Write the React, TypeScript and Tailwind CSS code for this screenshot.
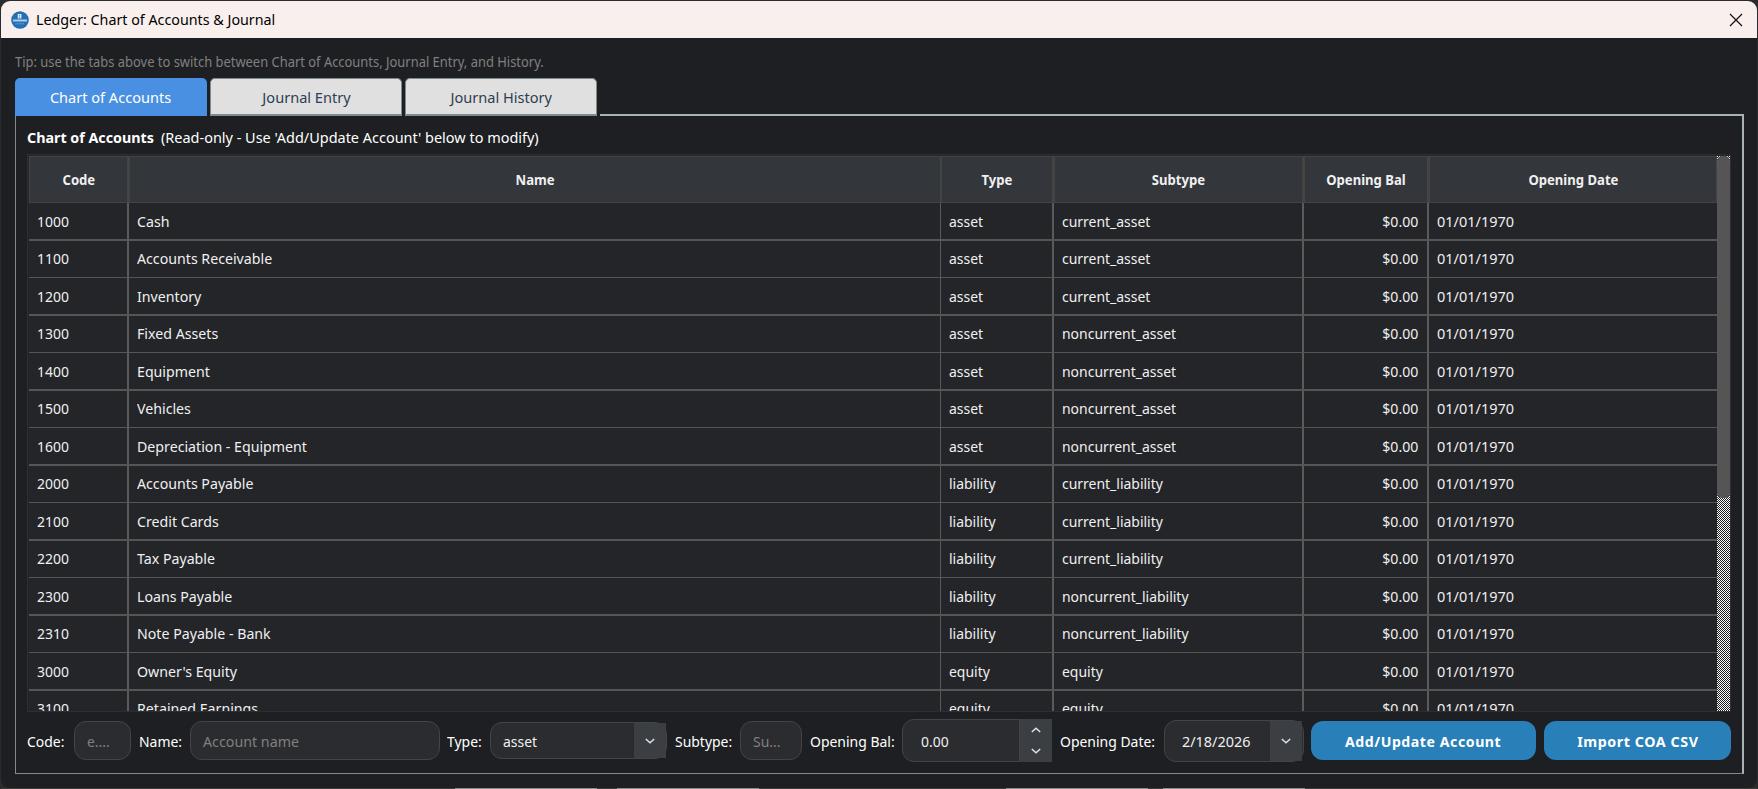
import type { ReactNode } from "react";

type Account = [code: string, name: string, type: string, subtype: string];

const accounts: Account[] = [
  ["1000", "Cash", "asset", "current_asset"],
  ["1100", "Accounts Receivable", "asset", "current_asset"],
  ["1200", "Inventory", "asset", "current_asset"],
  ["1300", "Fixed Assets", "asset", "noncurrent_asset"],
  ["1400", "Equipment", "asset", "noncurrent_asset"],
  ["1500", "Vehicles", "asset", "noncurrent_asset"],
  ["1600", "Depreciation - Equipment", "asset", "noncurrent_asset"],
  ["2000", "Accounts Payable", "liability", "current_liability"],
  ["2100", "Credit Cards", "liability", "current_liability"],
  ["2200", "Tax Payable", "liability", "current_liability"],
  ["2300", "Loans Payable", "liability", "noncurrent_liability"],
  ["2310", "Note Payable - Bank", "liability", "noncurrent_liability"],
  ["3000", "Owner's Equity", "equity", "equity"],
  ["3100", "Retained Earnings", "equity", "equity"],
];

const columns = "grid grid-cols-[100px_812px_113px_250px_125px_288px]";

/* Slightly condensed text run. */
function T({ children, className = "origin-left scale-x-[0.93]" }: { children: ReactNode; className?: string }) {
  return <span className={`inline-block whitespace-pre ${className}`}>{children}</span>;
}

function Logo() {
  return (
    <svg width="18" height="18" viewBox="0 0 18 18">
      <circle cx="9" cy="9" r="8.8" fill="#2470b5" />
      <path d="M6.8 3h3.6v4.6H6.8z" fill="#e4edf6" />
      <path d="M8 4.2h1v1H8zM8 6h1.2v.8H8z" fill="#2470b5" />
      <path d="M2.2 9.6h13.6" stroke="#d3e2f1" strokeWidth="2" strokeDasharray="1.6 .4" />
      <path d="M4.5 12.8h9" stroke="#7fadd8" strokeWidth=".9" strokeDasharray="1 .5" />
    </svg>
  );
}

function Chevron({ up = false }: { up?: boolean }) {
  return (
    <svg width="10" height="6" viewBox="0 0 10 6" fill="none" stroke="#e2e2e2" strokeWidth="1.5">
      <path d={up ? "M.8 5 5 1.2 9.2 5" : "M.8 1 5 4.8 9.2 1"} />
    </svg>
  );
}

/* One-pixel checkerboard of the scroll bar's track. */
function Track() {
  return (
    <svg className="col-start-1 row-start-1" width="13" height="555" shapeRendering="crispEdges">
      <defs>
        <pattern id="checker" width="2" height="2" patternUnits="userSpaceOnUse">
          <path d="M0 0h2v2H0z" fill="#1e1f22" />
          <path d="M0 0h1v1H0zM1 1h1v1H1z" fill="#fff" />
        </pattern>
      </defs>
      <rect width="13" height="555" fill="url(#checker)" />
    </svg>
  );
}

function HeadCell({ children, className = "border-r-2" }: { children: string; className?: string }) {
  return (
    <div className={`flex items-center justify-center border border-[#444444] bg-[#33363b] text-[13.5px] font-bold text-[#f0f0f0] ${className}`}>
      <T className="origin-center scale-x-[0.97]">{children}</T>
    </div>
  );
}

function Row({ account, index }: { account: Account; index: number }) {
  const [code, name, type, subtype] = account;
  const line = index % 2 === 0 ? "h-[38px] border-b-2" : "h-[37px] border-b";
  const cell = `flex items-center border-[#5a5a5a] pl-2 ${index % 2 === 0 ? "" : "pb-[2px]"}`;
  return (
    <div className={`${columns} ${line} border-[#555555]`}>
      <div className={`${cell} border-r-2`}><T>{code}</T></div>
      <div className={`${cell} border-r`}><T className="origin-left scale-x-[0.945]">{name}</T></div>
      <div className={`${cell} border-r-2`}><T>{type}</T></div>
      <div className={`${cell} border-r-2`}><T>{subtype}</T></div>
      <div className={`${cell} justify-end border-r-2 pr-[9px]`}><T className="origin-right scale-x-[0.94]">$0.00</T></div>
      <div className={cell}><T className="origin-left scale-x-[0.965]">01/01/1970</T></div>
    </div>
  );
}

function Tab({ children, active = false }: { children: string; active?: boolean }) {
  return (
    <div
      className={`flex h-[38px] w-[192px] items-center justify-center rounded-t-[5px] text-[15px] ${
        active
          ? "bg-[#4a90e2] text-white"
          : "border border-b-2 border-[#7f8c8d] bg-[#e0e0e0] text-[#2c3e50]"
      }`}
    >
      <T className="origin-center scale-x-[0.97]">{children}</T>
    </div>
  );
}

function Label({ children, className }: { children: string; className: string }) {
  return <div className={`shrink-0 text-white ${className}`}><T>{children}</T></div>;
}

export default function App() {
  return (
    <div className="flex h-[789px] w-[1758px] flex-col overflow-hidden bg-[#2b2b2d] pt-px pr-px pl-px font-['Noto_Sans',sans-serif] text-[15px] leading-5">
      <div className="flex h-[787px] flex-col overflow-hidden rounded-[9px] bg-[#1e1f22]">
        <header className="flex h-[37px] shrink-0 items-center bg-[#f9f0ee] pl-2.5 text-black">
          <Logo />
          <div className="ml-[7px] flex-1 pb-[2px] text-[15px]"><T className="origin-left scale-x-[0.952]">{"Ledger: Chart of Accounts & Journal"}</T></div>
          <svg className="mr-[14px]" width="14" height="14" viewBox="0 0 14 14" fill="none" stroke="#111" strokeWidth="1.2">
            <path d="m1 1 12 12M13 1 1 13" />
          </svg>
        </header>

        <main className="flex flex-1 flex-col pr-[13px] pl-[14px]">
          <div className="mt-[14px] text-[14px] text-[#808080]">
            <T className="origin-left scale-x-[0.923]">Tip: use the tabs above to switch between Chart of Accounts, Journal Entry, and History.</T>
          </div>

          <div className="mt-[6px] flex h-[38px] items-end">
            <div className="flex gap-[3px]">
              <Tab active>Chart of Accounts</Tab>
              <Tab>Journal Entry</Tab>
              <Tab>Journal History</Tab>
            </div>
            <div className="ml-[3px] h-[2px] flex-1 bg-[#a9b3b5]" />
          </div>

          <section className="flex h-[658px] flex-col border-r-2 border-b border-l border-r-[#a9b3b5] border-b-[#7f8c8d] border-l-[#7f8c8d] pr-[11px] pl-[11px]">
            <div className="mt-[11px] flex">
              <div className="w-[134px] font-bold text-white"><T className="origin-left scale-x-[0.952]">Chart of Accounts</T></div>
              <div className="text-white"><T className="origin-left scale-x-[0.964]">(Read-only - Use 'Add/Update Account' below to modify)</T></div>
            </div>

            <div className="mt-[7px] flex h-[558px] border border-[#2d2e31] bg-[#242529] pt-px pl-px">
              <div className="flex h-[555px] w-[1688px] flex-col overflow-hidden text-[#f0f0f0]">
                <div className={`${columns} h-[47px] shrink-0`}>
                  <HeadCell>Code</HeadCell>
                  <HeadCell className="border-r">Name</HeadCell>
                  <HeadCell>Type</HeadCell>
                  <HeadCell>Subtype</HeadCell>
                  <HeadCell>Opening Bal</HeadCell>
                  <HeadCell className="border-r">Opening Date</HeadCell>
                </div>
                {accounts.map((account, i) => (
                  <div key={account[0]} className="shrink-0"><Row account={account} index={i} /></div>
                ))}
              </div>
              <div className="grid h-[555px] w-[13px]">
                <Track />
                <div className="z-10 col-start-1 row-start-1 h-[342px] rounded-[5px] bg-[#555555]" />
              </div>
            </div>

            <div className="mt-[6px] flex h-[45px] items-center">
              <Label className="w-[47px]">Code:</Label>
              <div className="flex h-[39px] w-[57px] items-center rounded-[12px] border border-[#444444] bg-[#2b2c2f] pl-3 text-[#808080]"><T>e....</T></div>
              <Label className="ml-2 w-[51px]">Name:</Label>
              <div className="flex h-[39px] w-[250px] items-center rounded-[12px] border border-[#444444] bg-[#2b2c2f] pl-3 text-[#808080]"><T className="origin-left scale-x-[0.95]">Account name</T></div>
              <Label className="ml-[7px] w-[43px]">Type:</Label>
              <div className="flex h-[37px] w-[177px] items-center rounded-[12px] border border-[#444444] bg-[#2b2c2f] pl-3 text-[#f0f0f0]">
                <div className="flex-1"><T>asset</T></div>
                <div className="flex h-[35px] w-8 items-center justify-center bg-[#3b3e43] pr-px"><Chevron /></div>
              </div>
              <Label className="ml-2 w-[65px]">Subtype:</Label>
              <div className="flex h-[39px] w-[62px] items-center rounded-[12px] border border-[#444444] bg-[#2b2c2f] pl-3 text-[#808080]"><T>Su...</T></div>
              <Label className="ml-2 w-[92px]">Opening Bal:</Label>
              <div className="flex h-[43px] w-[150px] items-center">
                <div className="flex h-[43px] flex-1 items-center rounded-l-[12px] border border-[#444444] bg-[#2b2c2f] pl-[18px] text-[#f0f0f0]"><T>0.00</T></div>
                <div className="flex h-[43px] w-8 flex-col items-center justify-center gap-[15px] bg-[#3b3e43]"><Chevron up /><Chevron /></div>
              </div>
              <Label className="ml-2 w-[104px]">Opening Date:</Label>
              <div className="flex h-[42px] w-[140px] items-center rounded-[12px] border border-[#444444] bg-[#2b2c2f] pl-[17px] text-[#f0f0f0]">
                <div className="flex-1"><T className="origin-left scale-x-[0.96]">2/18/2026</T></div>
                <div className="mr-px flex h-[40px] w-8 items-center justify-center bg-[#3b3e43]"><Chevron /></div>
              </div>
              <div className="ml-[7px] flex h-[39px] w-[225px] items-center justify-center rounded-[12px] bg-[#2980b9] font-bold tracking-[0.6px] text-white"><T className="origin-center scale-x-[0.94]">Add/Update Account</T></div>
              <div className="ml-2 flex h-[39px] w-[187px] items-center justify-center rounded-[12px] bg-[#2980b9] font-bold tracking-[0.6px] text-white"><T className="origin-center scale-x-[0.95]">Import COA CSV</T></div>
            </div>
          </section>
        </main>
      </div>
      <div className="flex h-px shrink-0 bg-[#3c3c3d]">
        <div className="ml-[454px] w-[142px] bg-[#8b8b8b]" />
        <div className="ml-[20px] w-[142px] bg-[#8b8b8b]" />
        <div className="ml-[247px] w-[142px] bg-[#8b8b8b]" />
        <div className="ml-[15px] w-[142px] bg-[#8b8b8b]" />
      </div>
    </div>
  );
}
